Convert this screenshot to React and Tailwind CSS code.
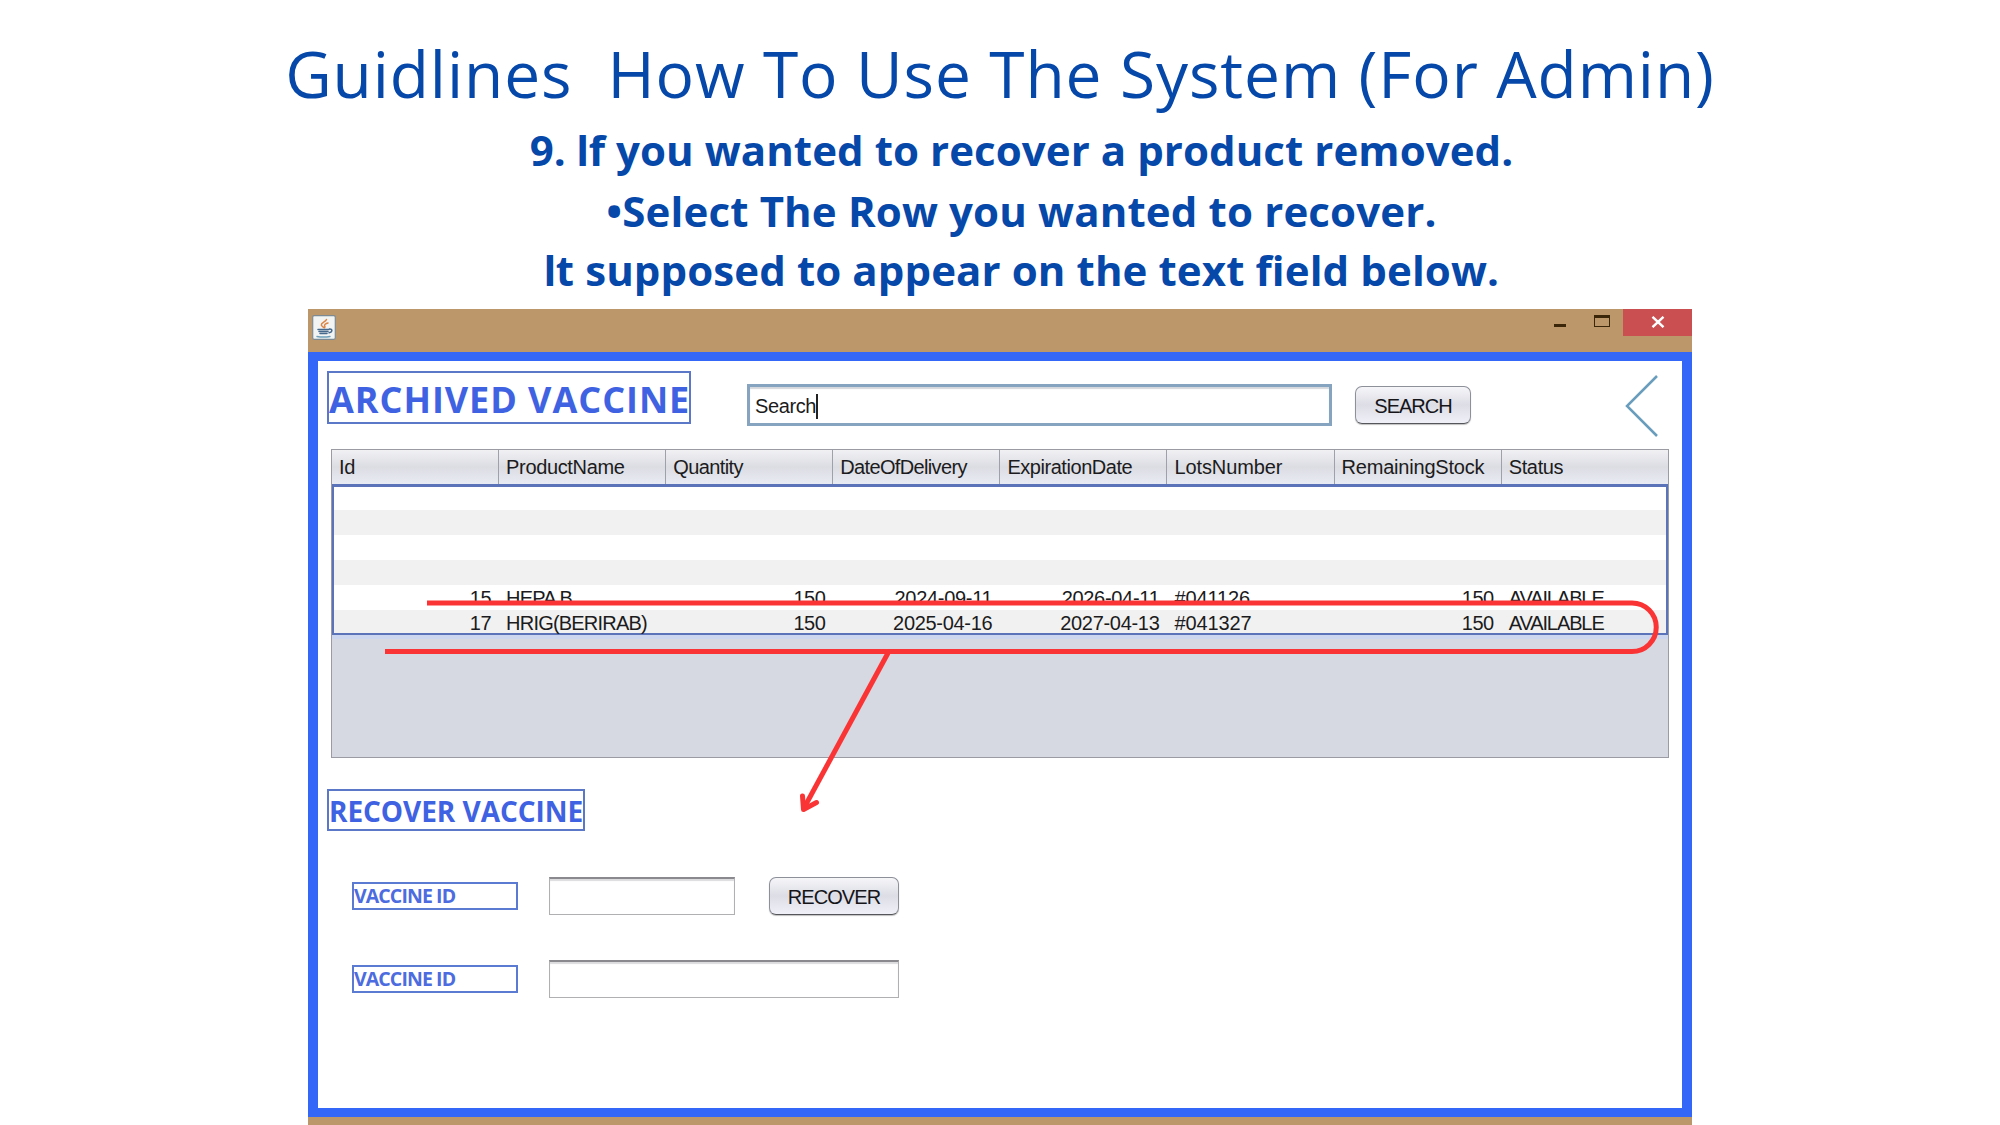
const columns = [
  { name: "Id", align: "text-right", tracking: "tracking-[-0.5px]", head: "tracking-[-0.35px]" },
  { name: "ProductName", align: "text-left", tracking: "tracking-[-0.8px]", head: "tracking-[-0.35px]" },
  { name: "Quantity", align: "text-right", tracking: "tracking-[-0.5px]", head: "tracking-[-0.6px]" },
  { name: "DateOfDelivery", align: "text-right", tracking: "tracking-[-0.3px]", head: "tracking-[-0.65px]" },
  { name: "ExpirationDate", align: "text-right", tracking: "tracking-[-0.3px]", head: "tracking-[-0.45px]" },
  { name: "LotsNumber", align: "text-left", tracking: "tracking-[-0.1px]", head: "tracking-[-0.1px]" },
  { name: "RemainingStock", align: "text-right", tracking: "tracking-[-0.5px]", head: "tracking-[-0.2px]" },
  { name: "Status", align: "text-left", tracking: "tracking-[-1.1px]", head: "tracking-[-0.35px]" },
];

const rows = [
  ["", "", "", "", "", "", "", ""],
  ["", "", "", "", "", "", "", ""],
  ["", "", "", "", "", "", "", ""],
  ["", "", "", "", "", "", "", ""],
  ["15", "HEPA B", "150", "2024-09-11", "2026-04-11", "#041126", "150", "AVAILABLE"],
  ["17", "HRIG(BERIRAB)", "150", "2025-04-16", "2027-04-13", "#041327", "150", "AVAILABLE"],
];

function JavaIcon() {
  return (
    <svg viewBox="0 0 24 25" className="h-[25px] w-6" fill="none">
      <rect x="0.7" y="0.7" width="22.6" height="23.6" rx="1.5" fill="#f1f4f3" stroke="#7d8a93" strokeWidth="1.2" />
      <path d="M14.500 4.500c-1 2.500-5.500 3.300-5.200 5.600.3 1 1.800 1.500 2.200 2.400M16 8c-2.400.6-4 1.800-3.300 3 .5.700.4 1.200-.2 1.800" stroke="#dd8444" strokeWidth="1.5" strokeLinecap="round" />
      <path d="M6 14.400h11M7 16.600h9M8 18.600h7" stroke="#47698c" strokeWidth="1.500" strokeLinecap="round" />
      <path d="M17.500 14c3.200-.3 3.200 3-.4 3.800" stroke="#47698c" strokeWidth="1.500" strokeLinecap="round" />
      <path d="M5 21.400c3.500.6 9.500.6 13 0" stroke="#6d9fba" strokeWidth="1.500" strokeLinecap="round" />
    </svg>
  );
}

function TitleBar() {
  return (
    <div className="flex h-[43px] items-start bg-[#bb976a]">
      <div className="pl-1 pt-[6px]">
        <JavaIcon />
      </div>
      <div className="ml-auto flex h-[27px] items-start">
        <div className="mt-[15px] h-[3px] w-[12px] bg-[#3b2609]" />
        <div className="ml-[28px] mt-[6px] h-[12px] w-[16px] border-x-[1.5px] border-b-[1.5px] border-t-[3px] border-[#3b2609]" />
        <div className="ml-[13px] flex h-[27px] w-[69px] items-center justify-center bg-[#c94f50] pb-[2px]">
          <svg viewBox="0 0 14 12" className="h-3 w-[14px]" stroke="#fff" strokeWidth="2.400">
            <path d="M1.500.8l11 10.400M12.500.8l-11 10.400" />
          </svg>
        </div>
      </div>
    </div>
  );
}

function SwingButton({ children, className }) {
  return (
    <button
      className={
        "flex h-[38px] items-center justify-center rounded-[7px] border border-[#8d8f99] border-b-[#55565c] bg-linear-to-b from-[#f6f6f9] via-[#dcdde5] to-[#f0f1f8] pt-[1px] text-[20px] leading-none text-[#15151a] shadow-[0_1px_1px_rgba(0,0,0,0.25)] " +
        className
      }
    >
      {children}
    </button>
  );
}

function FieldLabel() {
  return (
    <div className="flex h-[28px] w-[166px] items-center border-2 border-[#5b7ad2] font-['Open_Sans',sans-serif] text-[19.500px] font-bold leading-none tracking-[-0.900px] text-[#4c6ce0]">
      VACCINE ID
    </div>
  );
}

function TextField({ className }) {
  return (
    <div
      className={
        "h-[38px] border border-[#b0b0b3] border-t-2 border-t-[#8a8a8e] bg-white shadow-[inset_0_2px_1px_#dcdcdf] " +
        className
      }
    />
  );
}

function VaccineTable() {
  return (
    <div className="ml-[13px] mt-[25px] h-[309px] w-[1338px] border-[1.5px] border-[#9a9ba3] bg-[#d6d9e1] text-[20px] leading-none text-[#1b1b20]">
      <div className="flex h-[34px] bg-linear-to-b from-[#f1f1f4] via-[#dcdde3] to-[#e9ebf4]">
        {columns.map((c, i) => (
          <div
            key={c.name}
            className={
              "flex items-center pl-[7px] " +
              c.head + " " +
              (i < 7 ? "w-[167.100px] border-r-[1.5px] border-[#9fa1aa]" : "flex-1")
            }
          >
            {c.name}
          </div>
        ))}
      </div>
      <div className="border-2 border-t-3 border-[#5b73b8]">
        {rows.map((r, i) => (
          <div
            key={i}
            className={
              "flex items-start " +
              (i % 2 ? "bg-[#f1f1f1] " : "bg-white ") +
              (i === 5 ? "h-[23px]" : i === 0 ? "h-[23px]" : "h-[25px]")
            }
          >
            {r.map((v, j) => (
              <div
                key={j}
                className={
                  "w-[167.100px] shrink-0 whitespace-nowrap pl-[6px] pr-[9px] pt-[3px] " +
                  (j === 0 ? "-ml-[1px] " : "") +
                  columns[j].tracking + " " +
                  columns[j].align
                }
              >
                {v}
              </div>
            ))}
          </div>
        ))}
      </div>
      <div className="h-1 bg-[#ccd6ee]" />
    </div>
  );
}

function Annotations() {
  return (
    <svg
      viewBox="0 0 2000 1125"
      className="pointer-events-none absolute left-0 top-0 h-[1125px] w-[2000px]"
      fill="none"
      stroke="#fa3434"
      strokeWidth="5"
    >
      <path d="M427 603H1632a24.250 24.250 0 0 1 0 48.500H385" />
      <path d="M888 653L804 808" />
      <path d="M802.500 796l1 13.500 13-7" strokeLinecap="round" strokeLinejoin="round" />
    </svg>
  );
}

function PlainI() {
  return <span className="font-['Inter'] font-bold">I</span>;
}

export default function App() {
  return (
    <div className="relative flex h-[1125px] w-[2000px] flex-col overflow-hidden bg-white">
      <header className="flex h-[309px] flex-col items-center font-['Open_Sans',sans-serif] text-[#0648a9]">
        <h1 className="mt-[30px] whitespace-pre text-[64px] font-normal leading-[88px] tracking-[0.900px]">
          {"Guidlines  How To Use The System (For Admin)"}
        </h1>
        <div className="ml-[43px] mt-[2px] flex flex-col items-center whitespace-nowrap text-[42px] font-bold leading-[59.500px]">
          <p className="tracking-[0.070px]">9. <PlainI />f you wanted to recover a product removed.</p>
          <p className="tracking-[0.150px]">•Select The Row you wanted to recover.</p>
          <p className="tracking-[0.100px]"><PlainI />t supposed to appear on the text field below.</p>
        </div>
      </header>

      <main className="ml-[308px] flex h-[816px] w-[1384px] flex-col bg-[#bb976a] font-['Liberation_Sans',Arial,sans-serif]">
        <TitleBar />
        <div className="flex h-[765px] flex-col border-x-[10px] border-y-[9px] border-[#3466f8] bg-white">
          <div className="flex h-[63px] items-start pl-[10px] pt-[10px]">
            <h2 className="-ml-px flex h-[53px] w-[364px] items-center whitespace-nowrap border-2 border-[#5b78c8] pt-[4px] font-['Open_Sans',sans-serif] text-[36px] font-bold leading-none tracking-[0.950px] text-[#3f62e3]">
              ARCHIVED VACCINE
            </h2>
            <div className="ml-[56px] mt-[13px] flex h-[42px] w-[585px] items-center border-[3px] border-[#86a4bf] bg-white pl-[5px] pt-[2px] text-[20px] leading-none tracking-[-0.400px] text-[#1b1b20] shadow-[inset_0_2px_1px_#d5d8dc]">
              Search
              <span className="h-[25px] w-[2px] bg-[#222]" />
            </div>
            <SwingButton className="ml-[23px] mt-[15px] w-[116px] tracking-[-1px]">SEARCH</SwingButton>
            <svg viewBox="0 0 34 64" className="ml-[153px] mt-[3px] h-[64px] w-[34px] shrink-0" fill="none" stroke="#699dbd" strokeWidth="2.500">
              <path d="M33 2L3 32l30 30" />
            </svg>
          </div>

          <VaccineTable />

          <h3 className="ml-[9px] mt-[31px] flex h-[42px] w-[258px] shrink-0 items-center whitespace-nowrap border-2 border-[#5b78c8] pt-[1px] font-['Open_Sans',sans-serif] text-[28px] font-bold leading-none tracking-[-0.050px] text-[#3f62e3]">
            RECOVER VACCINE
          </h3>
          <div className="ml-[34px] mt-[46px] flex items-center">
            <FieldLabel />
            <TextField className="ml-[31px] w-[186px]" />
            <SwingButton className="ml-[34px] w-[130px] tracking-[-0.900px]">RECOVER</SwingButton>
          </div>
          <div className="ml-[34px] mt-[45px] flex items-center">
            <FieldLabel />
            <TextField className="ml-[31px] w-[350px]" />
          </div>
        </div>
      </main>

      <Annotations />
    </div>
  );
}
